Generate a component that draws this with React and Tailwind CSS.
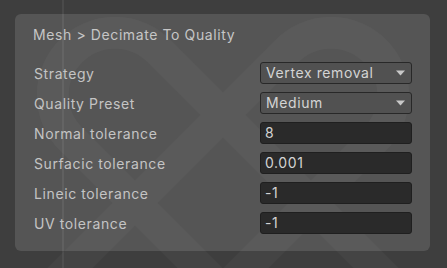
import React from "react";

const font = { fontFamily: "Inter, 'Noto Sans', sans-serif" };

function Dropdown({ value }) {
  return (
    <div className="flex h-[22px] w-[152px] items-center justify-between rounded-[3px] border border-[#282828] bg-[#515151] pl-[5px] pr-[6px] text-[14px] tracking-[0.6px] text-[#d4d4d4]">
      <span className="leading-none">{value}</span>
      <svg width="9" height="6" viewBox="0 0 9 6">
        <path d="M0 0.5 L9 0.5 L4.5 5.5 Z" fill="#c8c8c8" />
      </svg>
    </div>
  );
}

function Field({ value }) {
  return (
    <div className="flex h-[22px] w-[152px] items-center rounded-[3px] border border-[#1f1f1f] bg-[#2a2a2a] pl-[4px] text-[14px] tracking-[0.6px] text-[#d4d4d4]">
      <span className="leading-none">{value}</span>
    </div>
  );
}

const rows = [
  ["Strategy", "dd", "Vertex removal"],
  ["Quality Preset", "dd", "Medium"],
  ["Normal tolerance", "f", "8"],
  ["Surfacic tolerance", "f", "0.001"],
  ["Lineic tolerance", "f", "-1"],
  ["UV tolerance", "f", "-1"],
];

export default function App() {
  return (
    <div className="relative h-[268px] w-[447px] overflow-hidden bg-[#3e3e3e]" style={font}>
      <svg className="pointer-events-none absolute inset-0" width="447" height="268" viewBox="0 0 447 268">
        <rect x="62" y="0" width="2" height="268" fill="#4a4a4a" />
        <path
          d="M 390 282 L 159 51 A 62 62 0 0 0 71 139 L 215 283 M 56 282 L 287 51 A 62 62 0 0 1 375 139 L 231 283"
          fill="none"
          stroke="rgba(255,255,255,0.03)"
          strokeWidth="32"
        />
      </svg>
      <div className="relative ml-[15px] mt-[14px] flex h-[237px] w-[415px] flex-col rounded-[6px] bg-white/[0.12] px-[18px] pt-[10px]">
        <div className="flex h-[20px] items-center text-[14px] tracking-[0.6px] text-[#c6c6c6]">
          Mesh &gt; Decimate To Quality
        </div>
        <div className="mt-[18px] flex flex-col gap-[8px]">
          {rows.map(([label, kind, value]) => (
            <div key={label} className="flex h-[22px] items-center justify-between">
              <span className="pl-px text-[14px] tracking-[0.6px] text-[#c4c4c4]">{label}</span>
              {kind === "dd" ? <Dropdown value={value} /> : <Field value={value} />}
            </div>
          ))}
        </div>
      </div>
    </div>
  );
}
